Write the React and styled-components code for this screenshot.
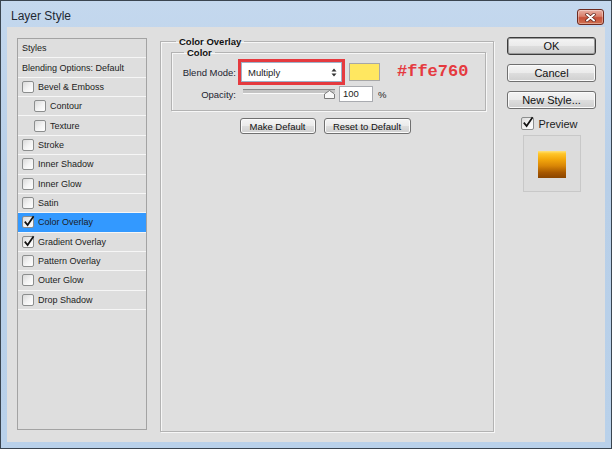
import React from 'react';
import styled, { createGlobalStyle } from 'styled-components';

const GlobalStyle = createGlobalStyle`
  html, body {
    margin: 0;
    padding: 0;
    background: #fff;
  }
  body {
    font-family: Tahoma, "Liberation Sans", Arial, sans-serif;
    color: #1c1c1c;
  }
`;

const Window = styled.div`
  box-sizing: border-box;
  width: 612px;
  height: 449px;
  border: 1px solid #3a4550;
  background: linear-gradient(180deg, #c4d8ee 0%, #b8cfe8 40%, #b9d1ea 100%);
  display: flex;
  flex-direction: column;
`;

const TitleBar = styled.div`
  height: 26px;
  flex: none;
  display: flex;
  align-items: flex-start;
  justify-content: space-between;
`;

const Title = styled.div`
  margin: 8px 0 0 10px;
  font-family: "Liberation Sans", Arial, sans-serif;
  font-size: 12px;
  line-height: 14px;
  color: #1e2833;
`;

const CloseButton = styled.div`
  box-sizing: border-box;
  width: 27px;
  height: 16px;
  margin: 8px 7px 0 0;
  border: 1px solid #6e2b20;
  border-radius: 3px;
  background: linear-gradient(180deg, #e8b0a4 0%, #d9806c 45%, #c6503a 55%, #d0704f 100%);
  box-shadow: inset 0 0 0 1px rgba(255, 255, 255, 0.35);
  display: flex;
  align-items: center;
  justify-content: center;
`;

const Client = styled.div`
  flex: 1;
  margin: 0 6px 6px 6px;
  background: #dfdfdf;
  box-sizing: border-box;
  padding: 9px 8px 10px 10px;
  display: flex;
  align-items: stretch;
`;

const StylesPanel = styled.div`
  box-sizing: border-box;
  width: 130px;
  flex: none;
  margin: 2px 0 2px 0;
  border: 1px solid #a3a3a3;
  background: #dedede;
`;

const StyleRow = styled.div`
  box-sizing: border-box;
  height: 19.36px;
  border-bottom: 1px solid #f6f6f6;
  display: flex;
  align-items: center;
  padding-left: ${p => (p.$sub ? 16 : 4)}px;
  background: ${p => (p.$selected ? '#3399ff' : 'transparent')};
  font-size: 9px;
  white-space: nowrap;
`;

const Box = styled.span`
  box-sizing: border-box;
  width: 12px;
  height: 12px;
  flex: none;
  margin-right: 4px;
  border: 1px solid #8c8e8e;
  border-radius: 2px;
  background: linear-gradient(135deg, #dadada 0%, #f4f4f4 55%, #ffffff 100%);
  position: relative;
`;

const Tick = styled.svg`
  position: absolute;
  left: 0px;
  top: -2px;
  overflow: visible;
`;

const Check = ({ checked }) => (
  <Box>
    {checked && (
      <Tick width="12" height="12" viewBox="0 0 12 12">
        <path d="M1.8 6.6 L4.6 10 L10.6 1.2" fill="none" stroke="#111" strokeWidth="1.7" />
      </Tick>
    )}
  </Box>
);

const Group = styled.fieldset`
  box-sizing: border-box;
  margin: 0;
  min-width: 0;
  border: 1px solid #b3b3b3;
  box-shadow: inset 1px 1px 0 #f7f7f7, 1px 1px 0 #f7f7f7;
  padding: ${p => p.$pad};
`;

const Legend = styled.legend`
  padding: 0 3px;
  margin-left: ${p => p.$indent}px;
  font-size: 9.5px;
  font-weight: bold;
  line-height: 11px;
  color: #111;
`;

const MainGroup = styled(Group)`
  width: 334px;
  flex: none;
  margin-left: 13px;
`;

const FieldRow = styled.div`
  display: flex;
  align-items: center;
  margin-top: ${p => p.$top || 0}px;
`;

const Label = styled.span`
  width: 64px;
  flex: none;
  text-align: right;
  font-size: 9.5px;
  color: #1c2330;
`;

const Highlight = styled.div`
  margin-left: 2px;
  border: 3px solid #e53a3f;
  display: flex;
`;

const Select = styled.div`
  box-sizing: border-box;
  width: 101px;
  height: 20px;
  border: 1px solid #9fb2c9;
  background: #fff;
  display: flex;
  align-items: center;
  justify-content: space-between;
  padding: 0 4px 0 6px;
  font-size: 9.5px;
`;

const Swatch = styled.div`
  box-sizing: border-box;
  width: 31px;
  height: 18px;
  margin-left: 4px;
  border: 1px solid #a7a7a7;
  background: ${p => p.$color};
`;

const HexNote = styled.span`
  margin-left: 17px;
  font-family: "Liberation Mono", "Courier New", monospace;
  font-weight: bold;
  font-size: 17px;
  line-height: 20px;
  color: #e53a3f;
`;

const Slider = styled.div`
  position: relative;
  width: 92px;
  height: 15px;
  margin-left: 7px;
`;

const Track = styled.div`
  position: absolute;
  left: 0;
  right: 0;
  top: 2px;
  height: 3px;
  border-top: 1px solid #8d8d8d;
  border-bottom: 1px solid #fafafa;
  background: #c4c4c4;
`;

const Thumb = styled.svg`
  position: absolute;
  left: 81px;
  top: 3px;
`;

const NumberBox = styled.div`
  box-sizing: border-box;
  width: 34px;
  height: 16px;
  margin-left: 4px;
  border: 1px solid #a9abb0;
  background: #fff;
  padding-left: 3px;
  font-size: 9.5px;
  line-height: 14px;
`;

const Unit = styled.span`
  margin-left: 5px;
  font-size: 9.5px;
`;

const ButtonRow = styled.div`
  display: flex;
  justify-content: center;
  gap: 8px;
  margin-top: 7px;
  padding-right: 7px;
`;

const Button = styled.div`
  box-sizing: border-box;
  width: ${p => p.$w}px;
  height: ${p => p.$h}px;
  margin-top: ${p => p.$top || 0}px;
  border: 1px solid ${p => (p.$default ? '#3c3c3c' : '#707070')};
  border-radius: 3px;
  background: linear-gradient(180deg, #f4f4f4 0%, #ebebeb 48%, #dddddd 52%, #cfcfcf 100%);
  box-shadow: inset 0 0 0 1px ${p => (p.$default ? '#9a9a9a' : '#fbfbfb')};
  display: flex;
  align-items: center;
  justify-content: center;
  font-size: ${p => p.$size}px;
  color: #111;
  white-space: nowrap;
`;

const SideColumn = styled.div`
  width: 89px;
  flex: none;
  margin: 1px 0 0 13px;
  display: flex;
  flex-direction: column;
  align-items: center;
`;

const PreviewToggle = styled.div`
  display: flex;
  align-items: center;
  margin-top: 8px;
  margin-right: 4px;
  font-size: 11px;
  & > span:first-child {
    width: 13px;
    height: 13px;
  }
`;

const PreviewBox = styled.div`
  box-sizing: border-box;
  width: 58px;
  height: 57px;
  margin-top: 5px;
  border: 1px solid #c8c8c8;
  background: #dcdcdc;
  display: flex;
  align-items: center;
  justify-content: center;
`;

const PreviewSwatch = styled.div`
  width: 28px;
  height: 27px;
  margin-top: 2px;
  background: linear-gradient(180deg, #ffe27a 0%, #ffc62a 10%, #f4a90c 30%, #d98606 55%, #a65700 80%, #8a4500 100%);
`;

const layerStyles = [
  { label: 'Bevel & Emboss' },
  { label: 'Contour', sub: true },
  { label: 'Texture', sub: true },
  { label: 'Stroke' },
  { label: 'Inner Shadow' },
  { label: 'Inner Glow' },
  { label: 'Satin' },
  { label: 'Color Overlay', checked: true, selected: true },
  { label: 'Gradient Overlay', checked: true },
  { label: 'Pattern Overlay' },
  { label: 'Outer Glow' },
  { label: 'Drop Shadow' },
];

export default function App() {
  return (
    <>
      <GlobalStyle />
      <Window>
        <TitleBar>
          <Title>Layer Style</Title>
          <CloseButton>
            <svg width="11" height="9" viewBox="0 0 11 9">
              <path d="M2 1.5 L9 7.5 M9 1.5 L2 7.5" stroke="#5a1f16" strokeWidth="3.4" strokeLinecap="round" />
              <path d="M2 1.5 L9 7.5 M9 1.5 L2 7.5" stroke="#fff" strokeWidth="2" strokeLinecap="round" />
            </svg>
          </CloseButton>
        </TitleBar>

        <Client>
          <StylesPanel>
            <StyleRow>Styles</StyleRow>
            <StyleRow>Blending Options: Default</StyleRow>
            {layerStyles.map(s => (
              <StyleRow key={s.label} $sub={s.sub} $selected={s.selected}>
                <Check checked={s.checked} />
                {s.label}
              </StyleRow>
            ))}
          </StylesPanel>

          <MainGroup $pad="0 7px 0 10px">
            <Legend $indent={5}>Color Overlay</Legend>
            <Group $pad="1px 0 8px 0">
              <Legend $indent={12}>Color</Legend>
              <FieldRow>
                <Label>Blend Mode:</Label>
                <Highlight>
                  <Select>
                    Multiply
                    <svg width="6" height="9" viewBox="0 0 6 9">
                      <path d="M0.5 3.5 L3 0.5 L5.5 3.5 Z M0.5 5.5 L3 8.5 L5.5 5.5 Z" fill="#333" />
                    </svg>
                  </Select>
                </Highlight>
                <Swatch $color="#ffe760" />
                <HexNote>#ffe760</HexNote>
              </FieldRow>
              <FieldRow $top={1}>
                <Label>Opacity:</Label>
                <Slider>
                  <Track />
                  <Thumb width="11" height="9" viewBox="0 0 11 9">
                    <path d="M0.5 8.5 L0.5 4 L5.5 0.5 L10.5 4 L10.5 8.5 Z" fill="#f8f8f8" stroke="#7a7a7a" />
                  </Thumb>
                </Slider>
                <NumberBox>100</NumberBox>
                <Unit>%</Unit>
              </FieldRow>
            </Group>
            <ButtonRow>
              <Button $w={76} $h={16} $size={9.5}>Make Default</Button>
              <Button $w={87} $h={16} $size={9.5}>Reset to Default</Button>
            </ButtonRow>
          </MainGroup>

          <SideColumn>
            <Button $w={89} $h={18} $size={11} $default>OK</Button>
            <Button $w={89} $h={18} $size={11} $top={9}>Cancel</Button>
            <Button $w={89} $h={18} $size={11} $top={9}>New Style...</Button>
            <PreviewToggle>
              <Check checked />
              Preview
            </PreviewToggle>
            <PreviewBox>
              <PreviewSwatch />
            </PreviewBox>
          </SideColumn>
        </Client>
      </Window>
    </>
  );
}
